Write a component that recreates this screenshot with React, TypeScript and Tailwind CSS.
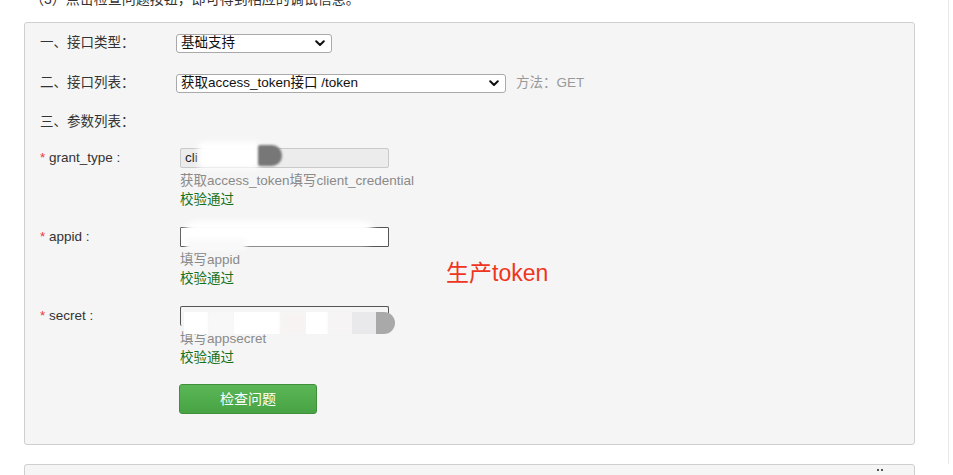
import React from "react";

const font = { fontFamily: '"Liberation Sans", "Noto Sans CJK SC", sans-serif' };

function Chevron() {
  return (
    <svg width="10" height="7" viewBox="0 0 10 7" className="shrink-0">
      <path d="M1.2 1.2 L5 5 L8.8 1.2" fill="none" stroke="#111" strokeWidth="2" strokeLinecap="round" strokeLinejoin="round" />
    </svg>
  );
}

function FakeSelect({ text, width }: { text: string; width: string }) {
  return (
    <div className={`${width} h-[19px] flex items-center justify-between pl-[4px] pr-[6px] bg-white border border-[#a9a9a9] rounded-[3px] text-[13.5px] text-[#111]`}>
      <span>{text}</span>
      <Chevron />
    </div>
  );
}

function Param({ name, hint, children }: { name: string; hint: string; children: React.ReactNode }) {
  return (
    <div className="flex mb-[18px]">
      <div className="w-[140px] leading-[20px] text-[13.5px] text-[#333]">
        <span className="text-[#e4393c]">*</span> {name} :
      </div>
      <div className="flex flex-col">
        <div className="relative w-[209px] h-[20px]">{children}</div>
        <div className="mt-[3px] leading-[19px] text-[13.5px] text-[#8a8a8a]">{hint}</div>
        <div className="leading-[19px] text-[13.5px] text-[#17701a]">校验通过</div>
      </div>
    </div>
  );
}

export default function App() {
  return (
    <div className="w-[953px] h-[475px] overflow-hidden bg-white" style={font}>
      <div className="w-[949px] h-[475px] border-r border-[#e8e8e8]">
        <div className="-mt-[11px] pl-[30px] text-[14px] leading-[20px] text-[#333]">
          （3）点击检查问题按钮，即可得到相应的调试信息。
        </div>

        <div className="mt-[13px] ml-[24px] w-[891px] h-[423px] border border-[#cfcfcf] rounded-[3px] bg-[#f5f5f5] pl-[15px] pt-[10px] relative">
          <div className="flex items-center h-[20px] text-[13.5px] text-[#333]">
            <div className="w-[136px]">一、接口类型：</div>
            <FakeSelect text="基础支持" width="w-[156px]" />
          </div>

          <div className="flex items-center h-[20px] mt-[20px] text-[13.5px] text-[#333]">
            <div className="w-[136px]">二、接口列表：</div>
            <FakeSelect text="获取access_token接口 /token" width="w-[330px]" />
            <span className="ml-[10px] text-[#999]">方法：GET</span>
          </div>

          <div className="flex items-center h-[20px] mt-[19px] mb-[16px] text-[13.5px] text-[#333]">
            三、参数列表：
          </div>

          <Param name="grant_type" hint="获取access_token填写client_credential">
            <div className="w-full h-full bg-[#ececec] border border-[#c9c9c9] rounded-[2px] text-[13.5px] text-[#222] pl-[4px] leading-[18px]">
              cli
            </div>
            <div className="absolute left-[18px] -top-[6px] w-[62px] h-[27px] bg-white blur-[3px] rounded-[4px]" />
            <div className="absolute left-[78px] -top-[3px] w-[24px] h-[21px] bg-[#777] rounded-r-[10px] rounded-l-[2px] blur-[1px]" />
          </Param>

          <Param name="appid" hint="填写appid">
            <div className="w-full h-full bg-white border border-[#555] rounded-[1px]" />
            <div className="absolute left-[4px] -top-[6px] w-[190px] h-[24px] bg-white blur-[3px] rounded-[12px]" />
            <div className="absolute left-[6px] top-[12px] w-[60px] h-[12px] bg-[#f9f9f9] blur-[2px]" />
          </Param>

          <Param name="secret" hint="填写appsecret">
            <div className="w-full h-full border-t border-l border-r border-[#555] rounded-[2px]" />
            <div className="absolute left-[4px] top-[6px] w-[24px] h-[22px] bg-white" />
            <div className="absolute left-[28px] top-[6px] w-[26px] h-[22px] bg-[#f8f8f8] blur-[1px]" />
            <div className="absolute left-[54px] top-[6px] w-[46px] h-[22px] bg-white" />
            <div className="absolute left-[100px] top-[6px] w-[26px] h-[22px] bg-[#f7f3f3] blur-[1px]" />
            <div className="absolute left-[126px] top-[6px] w-[22px] h-[22px] bg-white" />
            <div className="absolute left-[148px] top-[6px] w-[24px] h-[22px] bg-[#f6f4f4] blur-[1px]" />
            <div className="absolute left-[172px] top-[6px] w-[24px] h-[22px] bg-[#e9e9eb]" />
            <div className="absolute left-[196px] top-[6px] w-[19px] h-[22px] bg-[#a9a9a9] rounded-r-[11px]" />
          </Param>

          <div className="ml-[139px] -mt-[1px] w-[138px] h-[30px] flex items-center justify-center rounded-[3px] border border-[#3f8f3a] bg-gradient-to-b from-[#5bb656] to-[#47a343] text-white text-[14px]">
            检查问题
          </div>

          <div className="absolute left-[421px] top-[235px] text-[23px] leading-[30px] text-[#ee3522]">生产token</div>
        </div>

        <div className="mt-[19px] ml-[24px] w-[891px] h-[40px] border border-[#cfcfcf] rounded-[3px] bg-[#f5f5f5] relative">
          <div className="absolute left-[852px] top-[4px] flex gap-[2px]">
            <span className="w-[2px] h-[2px] bg-[#555]" />
            <span className="w-[2px] h-[2px] bg-[#555]" />
          </div>
        </div>
      </div>
    </div>
  );
}
